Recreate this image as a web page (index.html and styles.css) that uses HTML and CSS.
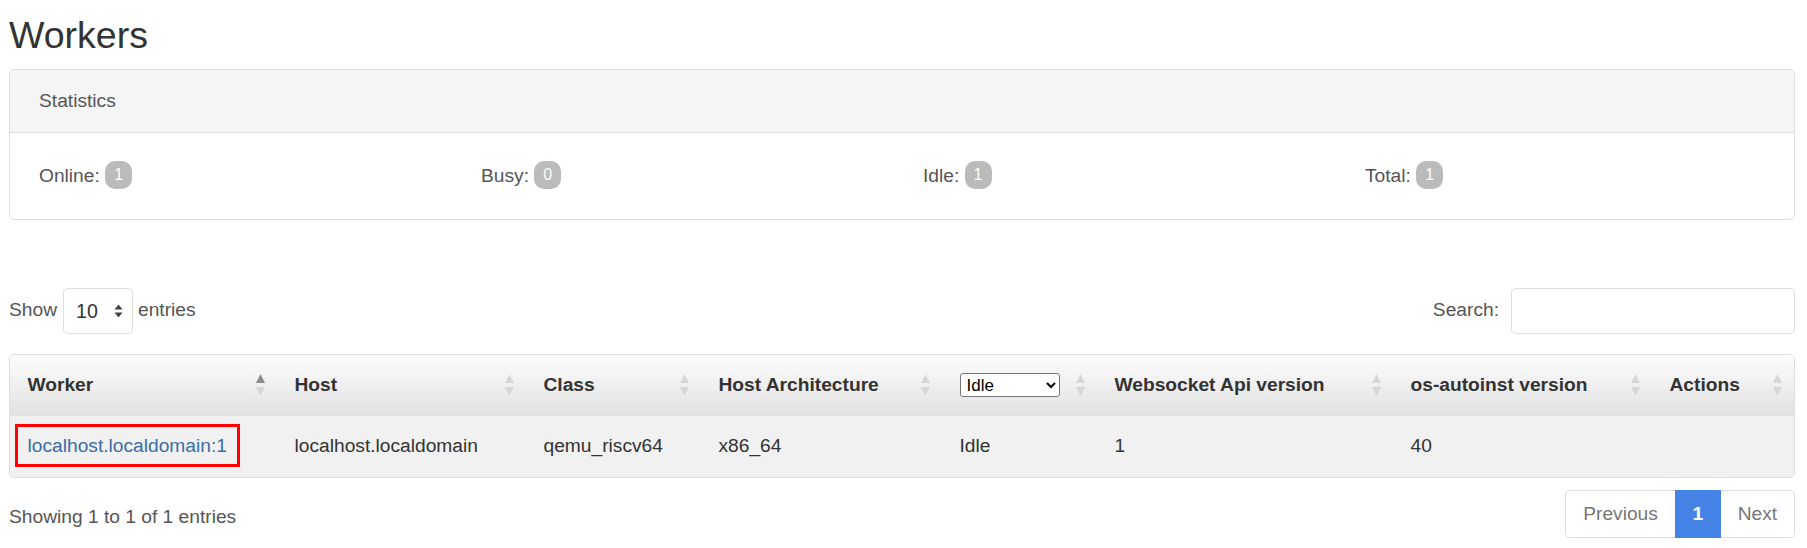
FILE: index.html
```html
<!DOCTYPE html>
<html lang="en">
<head>
<meta charset="utf-8">
<title>Workers</title>
<link rel="stylesheet" href="styles.css">
</head>
<body>
<main class="page">
  <h1 class="title">Workers</h1>

  <section class="card">
    <div class="card-header">Statistics</div>
    <div class="card-body stats">
      <div class="stat">Online: <span class="badge">1</span></div>
      <div class="stat">Busy: <span class="badge">0</span></div>
      <div class="stat">Idle: <span class="badge">1</span></div>
      <div class="stat">Total: <span class="badge">1</span></div>
    </div>
  </section>

  <div class="dt-top">
    <label class="length">Show <span class="select-wrap"><select class="length-select"><option>10</option><option>25</option><option>50</option></select><svg class="select-arrows" width="9" height="14" viewBox="0 0 9 14"><path d="M4.5 0.5 L8.5 5.5 L0.5 5.5 Z" fill="#444"/><path d="M0.5 8.5 L8.5 8.5 L4.5 13.5 Z" fill="#444"/></svg></span> entries</label>
    <label class="search">Search: <input type="search" class="search-input"></label>
  </div>

  <div class="table-wrap">
    <table class="workers">
      <colgroup>
        <col class="c-worker"><col class="c-host"><col class="c-class"><col class="c-arch"><col class="c-status"><col class="c-ws"><col class="c-os"><col class="c-actions">
      </colgroup>
      <thead>
        <tr>
          <th><div class="th-inner"><span>Worker</span><svg class="sort" width="9" height="24" viewBox="0 0 9 24"><path d="M4.5 1 L9 10 L0 10 Z" fill="#8a8a8a"/><path d="M0 14 L9 14 L4.5 23 Z" fill="#d6d6d6"/></svg></div></th>
          <th><div class="th-inner"><span>Host</span><svg class="sort" width="9" height="24" viewBox="0 0 9 24"><path d="M4.5 1 L9 10 L0 10 Z" fill="#d6d6d6"/><path d="M0 14 L9 14 L4.5 23 Z" fill="#d6d6d6"/></svg></div></th>
          <th><div class="th-inner"><span>Class</span><svg class="sort" width="9" height="24" viewBox="0 0 9 24"><path d="M4.5 1 L9 10 L0 10 Z" fill="#d6d6d6"/><path d="M0 14 L9 14 L4.5 23 Z" fill="#d6d6d6"/></svg></div></th>
          <th><div class="th-inner"><span>Host Architecture</span><svg class="sort" width="9" height="24" viewBox="0 0 9 24"><path d="M4.5 1 L9 10 L0 10 Z" fill="#d6d6d6"/><path d="M0 14 L9 14 L4.5 23 Z" fill="#d6d6d6"/></svg></div></th>
          <th><div class="th-inner"><select class="status-select"><option>Idle</option><option>Busy</option><option>Offline</option></select><svg class="sort" width="9" height="24" viewBox="0 0 9 24"><path d="M4.5 1 L9 10 L0 10 Z" fill="#d6d6d6"/><path d="M0 14 L9 14 L4.5 23 Z" fill="#d6d6d6"/></svg></div></th>
          <th><div class="th-inner"><span>Websocket Api version</span><svg class="sort" width="9" height="24" viewBox="0 0 9 24"><path d="M4.5 1 L9 10 L0 10 Z" fill="#d6d6d6"/><path d="M0 14 L9 14 L4.5 23 Z" fill="#d6d6d6"/></svg></div></th>
          <th><div class="th-inner"><span>os-autoinst version</span><svg class="sort" width="9" height="24" viewBox="0 0 9 24"><path d="M4.5 1 L9 10 L0 10 Z" fill="#d6d6d6"/><path d="M0 14 L9 14 L4.5 23 Z" fill="#d6d6d6"/></svg></div></th>
          <th><div class="th-inner"><span>Actions</span><svg class="sort" width="9" height="24" viewBox="0 0 9 24"><path d="M4.5 1 L9 10 L0 10 Z" fill="#d6d6d6"/><path d="M0 14 L9 14 L4.5 23 Z" fill="#d6d6d6"/></svg></div></th>
        </tr>
      </thead>
      <tbody>
        <tr>
          <td><span class="annot"><a class="link" href="#">localhost.localdomain:1</a></span></td>
          <td>localhost.localdomain</td>
          <td>qemu_riscv64</td>
          <td>x86_64</td>
          <td>Idle</td>
          <td>1</td>
          <td>40</td>
          <td></td>
        </tr>
      </tbody>
    </table>
  </div>

  <div class="dt-bottom">
    <div class="info">Showing 1 to 1 of 1 entries</div>
    <ul class="pagination">
      <li class="page-item prev">Previous</li>
      <li class="page-item active">1</li>
      <li class="page-item next">Next</li>
    </ul>
  </div>
</main>
</body>
</html>
```

FILE: styles.css
```css
html, body {
  margin: 0;
  padding: 0;
  background: #fff;
}

body {
  font-family: "Liberation Sans", Arial, Helvetica, sans-serif;
  font-size: 19.2px;
  line-height: 1.5;
  color: #555;
}

.page {
  padding: 0 12px 0 9px;
}

.title {
  margin: 15px 0 12.75px;
  font-size: 37.5px;
  font-weight: 400;
  line-height: 1.1;
  color: #333;
}

/* Statistics card */
.card {
  border: 1px solid #ddd;
  border-radius: 5px;
  overflow: hidden;
}

.card-header {
  background: #f5f5f5;
  border-bottom: 1px solid #ddd;
  padding: 16.5px 29px;
  color: #555;
}

.stats {
  display: grid;
  grid-template-columns: repeat(4, 1fr);
  padding: 28px 8px;
}

.stat {
  padding-left: 21px;
  color: #555;
}

.badge {
  display: inline-block;
  font-size: 16px;
  line-height: 16px;
  padding: 6px 9px;
  border-radius: 10px;
  background: #bbb;
  color: #fff;
  vertical-align: 2px;
}

/* DataTables top controls */
.dt-top {
  display: flex;
  justify-content: space-between;
  align-items: center;
  margin-top: 68px;
}

.length, .search {
  display: flex;
  align-items: center;
  color: #555;
}

.select-wrap {
  position: relative;
  display: inline-block;
  margin: 0 5px 0 6px;
}

.length-select {
  appearance: none;
  -webkit-appearance: none;
  width: 70px;
  height: 46px;
  border: 1px solid #ddd;
  border-radius: 5px;
  background: #fff;
  padding: 0 0 0 12px;
  font-family: inherit;
  font-size: 19.6px;
  color: #333;
  display: block;
}

.select-arrows {
  position: absolute;
  right: 10px;
  top: 16px;
  pointer-events: none;
}

.search-input {
  width: 284px;
  height: 46px;
  box-sizing: border-box;
  margin-left: 12px;
  border: 1px solid #ddd;
  border-radius: 5px;
  background: #fff;
  font-family: inherit;
  font-size: 19.2px;
  padding: 0 12px;
}

/* Table */
.table-wrap {
  margin-top: 20px;
  border: 1px solid #ddd;
  border-radius: 5px;
  overflow: hidden;
}

.workers {
  width: 100%;
  border-collapse: separate;
  border-spacing: 0;
  table-layout: fixed;
}

.c-worker { width: 267px; }
.c-host { width: 249px; }
.c-class { width: 175px; }
.c-arch { width: 241px; }
.c-status { width: 155px; }
.c-ws { width: 296px; }
.c-os { width: 259px; }
.c-actions { width: 142px; }

.workers th {
  height: 61px;
  padding: 0 0 0 17.5px;
  text-align: left;
  font-weight: 700;
  color: #333;
  background: linear-gradient(to bottom, #fdfdfd 0%, #e1e1e1 100%);
  vertical-align: middle;
  white-space: nowrap;
}

.th-inner {
  display: flex;
  justify-content: space-between;
  align-items: center;
  padding-right: 12px;
}

.sort {
  display: block;
  flex: none;
}

.status-select {
  width: 100px;
  height: 24px;
  font-family: "Liberation Sans", Arial, sans-serif;
  font-size: 17px;
  font-weight: 400;
  color: #000;
  background: #fff;
  border: 1px solid #767676;
  border-radius: 3px;
  padding: 0 2px;
}

.workers td {
  height: 61px;
  padding: 0 0 0 17.5px;
  background: #f1f1f1;
  color: #333;
  vertical-align: middle;
  white-space: nowrap;
}

.annot {
  position: relative;
}

.annot::after {
  content: "";
  position: absolute;
  top: -11px;
  bottom: -11px;
  left: -12.5px;
  right: -13px;
  border: 3px solid #ff0000;
  pointer-events: none;
}

.link {
  color: #3a6ea5;
  text-decoration: none;
}

/* Bottom */
.dt-bottom {
  display: flex;
  justify-content: space-between;
  align-items: center;
  margin-top: 12px;
}

.info {
  color: #555;
  padding-top: 8px;
}

.pagination {
  display: flex;
  list-style: none;
  margin: 0;
  padding: 0;
}

.page-item {
  height: 46px;
  line-height: 46px;
  padding: 0 16.8px;
  border: 1px solid #ddd;
  color: #777;
  background: #fff;
}

.page-item.prev {
  border-right: none;
  border-radius: 5px 0 0 5px;
}

.page-item.next {
  border-left: none;
  border-radius: 0 5px 5px 0;
}

.page-item.active {
  background: #4683e6;
  border-color: #4683e6;
  color: #fff;
  font-weight: 700;
}
```
